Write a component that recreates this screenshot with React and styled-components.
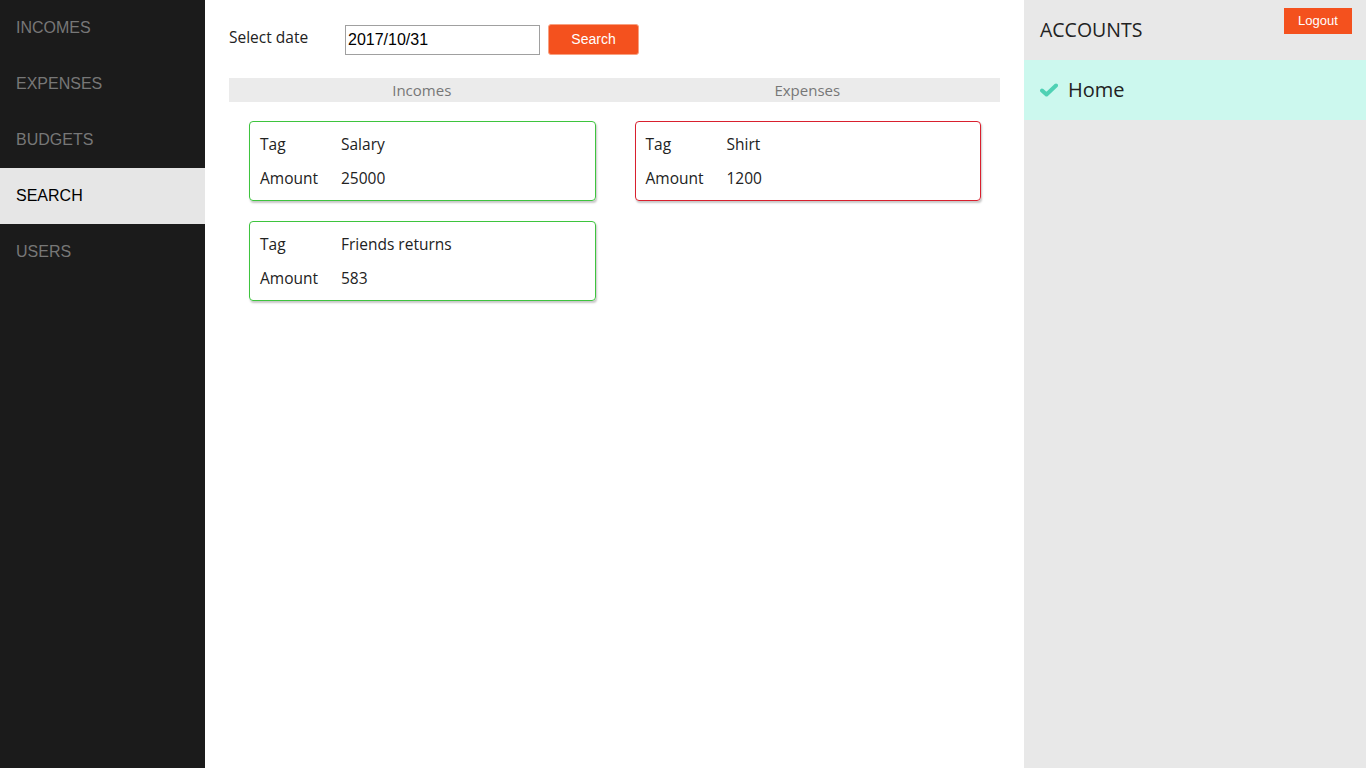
import React, { useState } from 'react'
import styled, { createGlobalStyle } from 'styled-components'

const GlobalStyle = createGlobalStyle`
  html, body {
    margin: 0;
    padding: 0;
    height: 100%;
  }
  body {
    font-family: "Open Sans", "Noto Sans", sans-serif;
  }
  #root {
    height: 100%;
  }
`;

const navItems = ['INCOMES', 'EXPENSES', 'BUDGETS', 'SEARCH', 'USERS'];

const incomes = [
  { tag: 'Salary', amount: 25000 },
  { tag: 'Friends returns', amount: 583 },
];

const expenses = [
  { tag: 'Shirt', amount: 1200 },
];

export default function App() {
  const [date, setDate] = useState('2017/10/31');

  return (
    <Page>
      <GlobalStyle />
      <SideNav>
        {navItems.map((item) => (
          <NavItem key={item} active={item === 'SEARCH'}>{item}</NavItem>
        ))}
      </SideNav>

      <Main>
        <SearchRow>
          <Label>Select date</Label>
          <DateInput value={date} onChange={(e) => setDate(e.target.value)} />
          <SearchButton>Search</SearchButton>
        </SearchRow>

        <Columns>
          <Column>
            <ColumnHeader>Incomes</ColumnHeader>
            <CardList>
              {incomes.map((i) => (
                <Card key={i.tag} kind="income">
                  <Row><Key>Tag</Key><Value>{i.tag}</Value></Row>
                  <Row><Key>Amount</Key><Value>{i.amount}</Value></Row>
                </Card>
              ))}
            </CardList>
          </Column>
          <Column>
            <ColumnHeader>Expenses</ColumnHeader>
            <CardList>
              {expenses.map((i) => (
                <Card key={i.tag} kind="expense">
                  <Row><Key>Tag</Key><Value>{i.tag}</Value></Row>
                  <Row><Key>Amount</Key><Value>{i.amount}</Value></Row>
                </Card>
              ))}
            </CardList>
          </Column>
        </Columns>
      </Main>

      <Accounts>
        <AccountsHeader>
          <AccountsTitle>ACCOUNTS</AccountsTitle>
          <LogoutButton>Logout</LogoutButton>
        </AccountsHeader>
        <AccountItem>
          <svg width="18" height="14" viewBox="0 0 18 14">
            <path d="M2 7.5 L6.5 11.5 L16 2.5" fill="none" stroke="#4fd1b4" strokeWidth="4" strokeLinecap="round" strokeLinejoin="round" />
          </svg>
          <span>Home</span>
        </AccountItem>
      </Accounts>
    </Page>
  )
}

const Page = styled.div`
  display: grid;
  grid-template-columns: 205px 819px 1fr;
  height: 768px;
`;

const SideNav = styled.nav`
  background-color: #1b1b1b;
  display: flex;
  flex-direction: column;
`;

const NavItem = styled.div`
  height: 56px;
  line-height: 56px;
  padding-left: 16px;
  font-family: "Liberation Sans", Arial, sans-serif;
  font-size: 16px;
  color: ${(p) => (p.active ? '#000' : '#777')};
  background-color: ${(p) => (p.active ? '#e6e6e6' : 'transparent')};
`;

const Main = styled.main`
  background: #fff;
  padding: 24px 24px 0 24px;
`;

const SearchRow = styled.div`
  display: flex;
  align-items: center;
  height: 31px;
`;

const Label = styled.span`
  width: 116px;
  font-size: 15.5px;
  color: #222;
  margin-top: -6px;
`;

const DateInput = styled.input`
  width: 195px;
  height: 30px;
  box-sizing: border-box;
  border: 1px solid #a0a0a0;
  padding: 1px 2px;
  font-family: "Liberation Sans", Arial, sans-serif;
  font-size: 16px;
  color: #000;
  outline: none;
`;

const SearchButton = styled.button`
  margin-left: 8px;
  width: 91px;
  height: 31px;
  box-sizing: border-box;
  background-color: #f4511e;
  border: 1px solid #f8a080;
  border-radius: 3px;
  color: #fff;
  font-family: "Liberation Sans", Arial, sans-serif;
  font-size: 14px;
  padding-bottom: 2px;
`;

const Columns = styled.div`
  margin-top: 23px;
  width: 771px;
  display: grid;
  grid-template-columns: 1fr 1fr;
`;

const Column = styled.div`
  display: flex;
  flex-direction: column;
`;

const ColumnHeader = styled.div`
  background-color: #ebebeb;
  height: 24px;
  line-height: 24px;
  text-align: center;
  color: #777;
  font-size: 15px;
`;

const CardList = styled.div`
  display: flex;
  flex-direction: column;
  gap: 20px;
  padding: 19px 19px 0 20px;
`;

const Card = styled.div`
  height: 80px;
  box-sizing: border-box;
  border: 1px solid ${(p) => (p.kind === 'income' ? '#3ec43e' : '#d9202e')};
  border-radius: 4px;
  box-shadow: 1px 2px 2px rgba(0, 0, 0, 0.22);
  padding: 10px 10px;
  display: flex;
  flex-direction: column;
  gap: 10px;
`;

const Row = styled.div`
  display: flex;
  height: 24px;
  align-items: center;
  font-size: 15.5px;
  color: #222;
`;

const Key = styled.span`
  width: 81px;
`;

const Value = styled.span``;

const Accounts = styled.aside`
  background-color: #e8e8e8;
`;

const AccountsHeader = styled.div`
  height: 60px;
  display: flex;
  justify-content: space-between;
  align-items: flex-start;
  padding: 0 14px 0 16px;
`;

const AccountsTitle = styled.h2`
  margin: 16px 0 0 0;
  font-size: 19.5px;
  font-weight: 400;
  color: #222;
`;

const LogoutButton = styled.button`
  margin-top: 8px;
  width: 68px;
  height: 26px;
  border: none;
  background-color: #f4511e;
  color: #fff;
  font-family: "Liberation Sans", Arial, sans-serif;
  font-size: 13px;
  padding-bottom: 2px;
`;

const AccountItem = styled.div`
  height: 60px;
  background-color: #ccf8ee;
  display: flex;
  align-items: center;
  gap: 10px;
  padding-left: 16px;
  font-size: 20px;
  color: #222;
  padding-bottom: 1px;
  box-sizing: border-box;
`;
